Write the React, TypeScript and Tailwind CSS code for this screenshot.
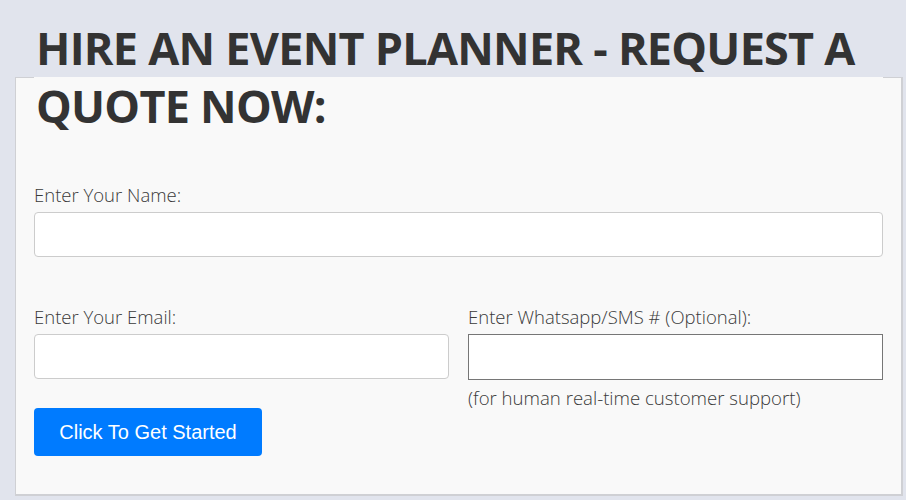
import React from "react";

export default function App() {
  const label = "block text-[18.5px] leading-[24px] font-light text-[#3a3a3a] mb-[5px]";
  return (
    <div
      className="min-h-[500px] bg-[#e1e4ed] pt-[77px] pl-[15px] pr-[3px] pb-[4px]"
      style={{ fontFamily: '"Open Sans", "Noto Sans", sans-serif' }}
    >
      <div className="relative bg-[#f9f9f9] border border-[#cfd0d4] border-r-2 border-b-2 px-[18px] pb-[38px]">
        <div className="absolute top-[-1px] left-[18px] right-[18px] h-px bg-[#f9f9f9]" />
        <h1 className="relative -mt-[59px] pl-[2px] text-[45px] leading-[58px] font-bold text-[#333] tracking-[-0.75px]">
          HIRE AN EVENT PLANNER - REQUEST A QUOTE NOW:
        </h1>
        <div className="mt-[48px]">
          <label className={label}>Enter Your Name:</label>
          <input className="block w-full h-[45px] bg-white border border-[#ccc] rounded-[4px]" />
        </div>
        <div className="grid grid-cols-2 gap-x-[19px] mt-[48px]">
          <div>
            <label className={label}>Enter Your Email:</label>
            <input className="block w-full h-[45px] bg-white border border-[#ccc] rounded-[4px]" />
            <button
              className="mt-[29px] h-[48px] w-[228px] bg-[#007bff] text-white rounded-[4px] text-[20px]"
              style={{ fontFamily: '"Liberation Sans", Arial, sans-serif' }}
            >
              Click To Get Started
            </button>
          </div>
          <div>
            <label className={label}>Enter Whatsapp/SMS # (Optional):</label>
            <input className="block w-full h-[46px] bg-white border border-[#767676]" />
            <div className="mt-[6px] text-[18.6px] leading-[24px] font-light text-[#3a3a3a]">
              (for human real-time customer support)
            </div>
          </div>
        </div>
      </div>
    </div>
  );
}
